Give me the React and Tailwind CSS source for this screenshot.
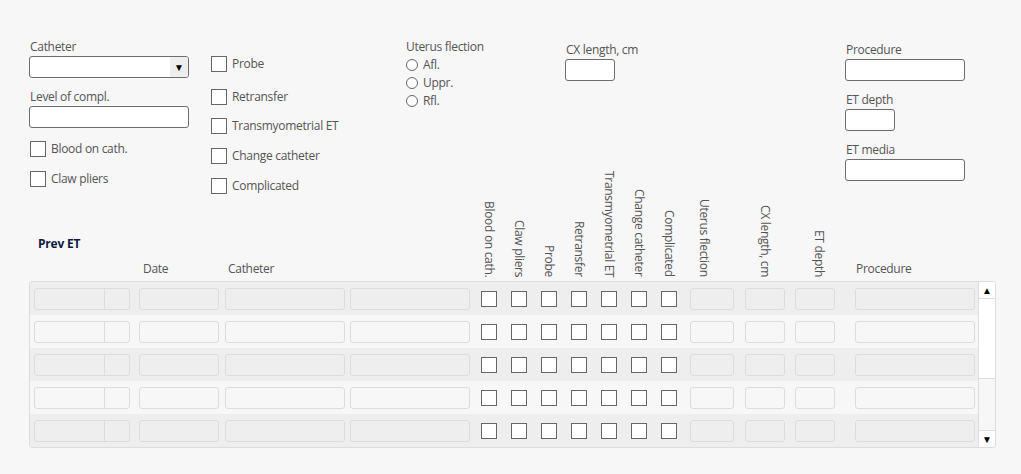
import React from 'react';

const Label = ({ children, className = '' }) => (
  <div className={`text-[12px] leading-[16px] tracking-[-0.3px] text-[#555] whitespace-nowrap ${className}`}>
    {children}
  </div>
);

const Box = () => <span className="block w-4 h-4 border border-[#666] bg-white shrink-0" />;

const CheckField = ({ label, className = '' }) => (
  <div className={`flex items-center ${className}`}>
    <Box />
    <span className="ml-[5px] text-[12px] leading-[16px] tracking-[-0.3px] text-[#555] whitespace-nowrap">
      {label}
    </span>
  </div>
);

const Radio = ({ label }) => (
  <div className="flex items-center h-[18px]">
    <span className="block w-[12px] h-[12px] rounded-full border border-[#666] bg-white" />
    <span className="ml-[5px] text-[12px] leading-[16px] tracking-[-0.3px] text-[#555]">{label}</span>
  </div>
);

const TextInput = ({ className = '' }) => (
  <div className={`h-[22px] border border-[#6e6e6e] rounded-[3px] bg-white ${className}`} />
);

const Cell = ({ className = '' }) => (
  <div className={`h-[22px] border border-[#dcdcdc] rounded-[3px] ${className}`} />
);

const VText = ({ children }) => (
  <div className="[writing-mode:vertical-rl] text-[12px] leading-[16px] tracking-[-0.3px] text-[#555] whitespace-nowrap">
    {children}
  </div>
);

const checkHeads = [
  'Blood on cath.',
  'Claw pliers',
  'Probe',
  'Retransfer',
  'Transmyometrial ET',
  'Change catheter',
  'Complicated',
];

const TableRow = ({ dark }) => (
  <div className={`flex items-center h-[33px] pl-[4px] ${dark ? 'bg-[#eeeeee]' : 'bg-[#f7f7f7]'}`}>
    <div className="flex w-[96px] h-[22px] border border-[#dcdcdc] rounded-[3px]">
      <div className="w-[70px] border-r border-[#dcdcdc]" />
    </div>
    <Cell className="ml-[9px] w-[80px]" />
    <Cell className="ml-[6px] w-[120px]" />
    <Cell className="ml-[5px] w-[120px]" />
    <div className="ml-[11px] flex gap-[14px]">
      {checkHeads.map((h) => (
        <Box key={h} />
      ))}
    </div>
    <Cell className="ml-[13px] w-[44px]" />
    <Cell className="ml-[11px] w-[40px]" />
    <Cell className="ml-[10px] w-[40px]" />
    <Cell className="ml-[20px] w-[120px]" />
  </div>
);

export default function App() {
  return (
    <div className="w-[1021px] h-[474px] bg-[#f7f7f7] font-['Open_Sans','Liberation_Sans',sans-serif] overflow-hidden">
      {/* Form fields */}
      <div className="flex pt-[38px] pl-[29px] h-[170px]">
        <div className="w-[160px] shrink-0">
          <Label className="pl-[1px] pt-[1px]">Catheter</Label>
          <div className="mt-[1px] flex h-[22px] border border-[#6e6e6e] rounded-[3px] bg-white">
            <div className="flex-1" />
            <div className="w-[18px] bg-[#eeeeee] rounded-r-[2px] flex items-center justify-center text-[10px] text-black">
              ▼
            </div>
          </div>
          <Label className="pl-[1px] mt-[11px]">Level of compl.</Label>
          <TextInput className="mt-[1px]" />
          <CheckField className="mt-[13px] ml-[1px]" label="Blood on cath." />
          <CheckField className="mt-[14px] ml-[1px]" label="Claw pliers" />
        </div>

        <div className="ml-[22px] w-[195px] shrink-0">
          <CheckField className="mt-[18px]" label="Probe" />
          <CheckField className="mt-[17px]" label="Retransfer" />
          <CheckField className="mt-[13px]" label="Transmyometrial ET" />
          <CheckField className="mt-[14px]" label="Change catheter" />
          <CheckField className="mt-[14px]" label="Complicated" />
        </div>

        <div className="w-[159px] shrink-0">
          <Label className="pt-[1px]">Uterus flection</Label>
          <div className="mt-[1px]">
            <Radio label="Afl." />
            <Radio label="Uppr." />
            <Radio label="Rfl." />
          </div>
        </div>

        <div className="w-[280px] shrink-0 pt-[4px]">
          <Label className="pl-[1px]">CX length, cm</Label>
          <TextInput className="mt-[1px] w-[50px]" />
        </div>

        <div className="w-[120px] shrink-0 pt-[4px]">
          <Label className="pl-[1px]">Procedure</Label>
          <TextInput className="mt-[1px]" />
          <Label className="pl-[1px] mt-[11px]">ET depth</Label>
          <TextInput className="mt-[1px] w-[50px]" />
          <Label className="pl-[1px] mt-[11px]">ET media</Label>
          <TextInput className="mt-[1px]" />
        </div>
      </div>

      {/* Prev ET header */}
      <div className="flex items-end h-[111px] pb-[4px] pl-[34px]">
        <div className="w-[96px] mb-[25px] pl-[4px] text-[12px] leading-[16px] tracking-[-0.2px] font-bold text-[#0d1a45]">
          Prev ET
        </div>
        <div className="ml-[9px] w-[80px] pl-[4px]">
          <Label>Date</Label>
        </div>
        <div className="ml-[6px] w-[120px] pl-[3px]">
          <Label>Catheter</Label>
        </div>
        <div className="ml-[5px] w-[120px]" />
        <div className="ml-[11px] flex gap-[14px] items-end">
          {checkHeads.map((h) => (
            <div key={h} className="w-4 flex justify-center">
              <VText>{h}</VText>
            </div>
          ))}
        </div>
        <div className="ml-[13px] w-[44px] pl-[6px]">
          <VText>Uterus flection</VText>
        </div>
        <div className="ml-[11px] w-[40px] pl-[12px]">
          <VText>CX length, cm</VText>
        </div>
        <div className="ml-[10px] w-[40px] pl-[16px]">
          <VText>ET depth</VText>
        </div>
        <div className="ml-[20px] w-[120px] pl-[1px]">
          <Label>Procedure</Label>
        </div>
      </div>

      {/* Prev ET grid */}
      <div className="ml-[29px] w-[967px] flex border border-[#dddddd] rounded-[3px] overflow-hidden">
        <div className="flex-1">
          <TableRow dark />
          <TableRow />
          <TableRow dark />
          <TableRow />
          <TableRow dark />
        </div>
        <div className="w-[17px] flex flex-col border-l border-[#dddddd] bg-[#f7f7f7]">
          <div className="h-[17px] bg-white border-b border-[#dddddd] flex items-center justify-center text-[10px] text-black">
            ▲
          </div>
          <div className="h-[80px] bg-white border-b border-[#dddddd]" />
          <div className="flex-1" />
          <div className="h-[17px] bg-white border-t border-[#dddddd] flex items-center justify-center text-[10px] text-black">
            ▼
          </div>
        </div>
      </div>
    </div>
  );
}
